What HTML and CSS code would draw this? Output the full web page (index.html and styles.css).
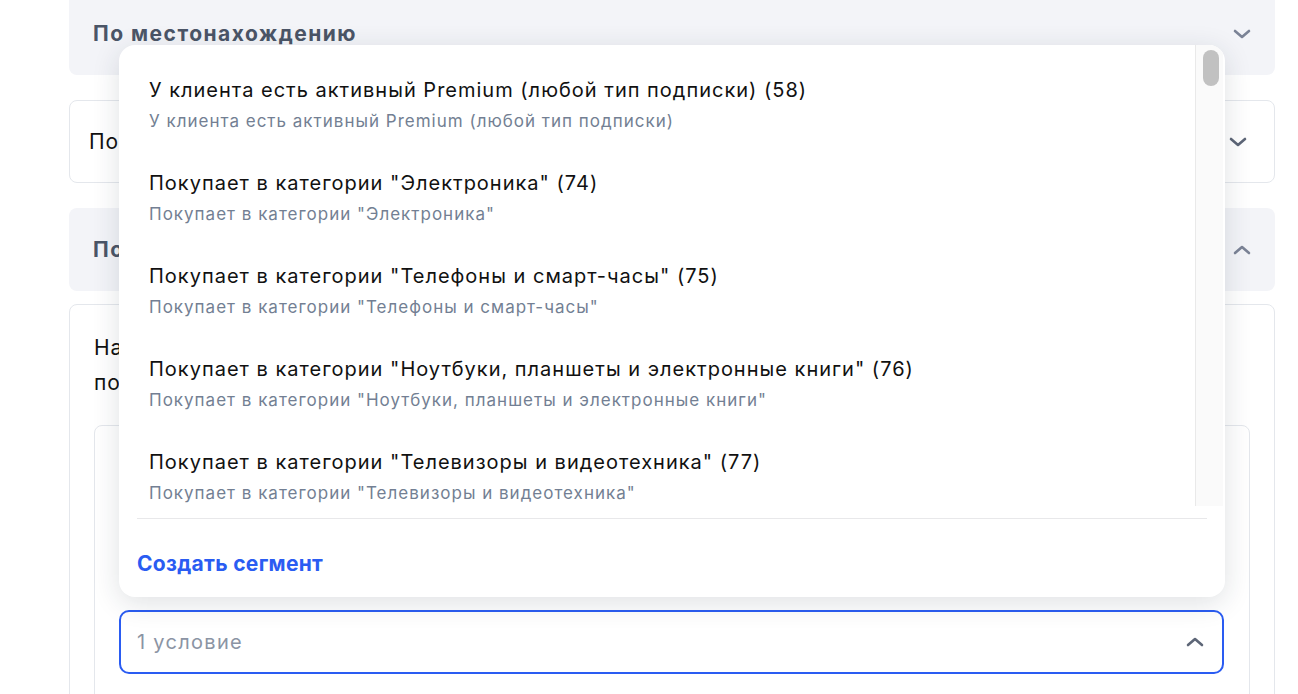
FILE: index.html
```html
<!DOCTYPE html>
<html lang="ru">
<head>
    <meta charset="UTF-8" />
    <meta name="viewport" content="width=device-width, initial-scale=1" />
    <title>Условия сегмента</title>
    <link rel="stylesheet" href="styles.css">
</head>
<body>
    <div class="page">
        <div class="section section-grey">
            <span class="section-title">По местонахождению</span>
            <svg class="chevron" width="18" height="10" viewBox="0 0 18 10"><path d="M2 2l7 6 7-6" /></svg>
        </div>

        <div class="section section-white">
            <span class="section-title-light">По сегментам</span>
            <svg class="chevron chevron-dark" width="18" height="10" viewBox="0 0 18 10"><path d="M2 2l7 6 7-6" /></svg>
        </div>

        <div class="section section-grey">
            <span class="section-title">По поведению</span>
            <svg class="chevron" width="18" height="10" viewBox="0 0 18 10"><path d="M2 8l7-6 7 6" /></svg>
        </div>

        <div class="panel">
            <p class="panel-text">На основе условий<br>подбираются клиенты</p>

            <div class="rule-box">
                <div class="select-wrap">
                    <!-- dropdown opens upwards over the rule box -->
                    <div class="dropdown">
                        <div class="dropdown-body">
                            <div class="options">
                                <div class="option">
                                    <div class="option-title">У клиента есть активный Premium (любой тип подписки) (58)</div>
                                    <div class="option-sub">У клиента есть активный Premium (любой тип подписки)</div>
                                </div>
                                <div class="option">
                                    <div class="option-title">Покупает в категории "Электроника" (74)</div>
                                    <div class="option-sub">Покупает в категории "Электроника"</div>
                                </div>
                                <div class="option">
                                    <div class="option-title">Покупает в категории "Телефоны и смарт-часы" (75)</div>
                                    <div class="option-sub">Покупает в категории "Телефоны и смарт-часы"</div>
                                </div>
                                <div class="option">
                                    <div class="option-title">Покупает в категории "Ноутбуки, планшеты и электронные книги" (76)</div>
                                    <div class="option-sub">Покупает в категории "Ноутбуки, планшеты и электронные книги"</div>
                                </div>
                                <div class="option">
                                    <div class="option-title">Покупает в категории "Телевизоры и видеотехника" (77)</div>
                                    <div class="option-sub">Покупает в категории "Телевизоры и видеотехника"</div>
                                </div>
                            </div>
                            <div class="scrollbar"><div class="scroll-thumb"></div></div>
                        </div>
                        <div class="dropdown-footer">
                            <a class="create-link" href="#">Создать сегмент</a>
                        </div>
                    </div>

                    <div class="select">
                        <span class="select-placeholder">1 условие</span>
                        <svg class="chevron chevron-dark" width="18" height="10" viewBox="0 0 18 10"><path d="M2 8l7-6 7 6" /></svg>
                    </div>
                </div>
            </div>
        </div>
    </div>
</body>
</html>
```

FILE: styles.css
```css
:root {
    --grey-bg: #f3f4f8;
    --border: #e4e7ec;
    --title: #4b5567;
    --text: #111111;
    --muted: #737f93;
    --blue: #2a5cf2;
}

body {
    font-family: Inter, "Noto Sans", sans-serif;
    color: var(--text);
    background: #fff;
    margin: 0;
    overflow: hidden;
}

.page {
    width: 1206px;
    margin: -8px 0 0 69px;
}

.section {
    height: 83px;
    box-sizing: border-box;
    display: flex;
    align-items: center;
    justify-content: space-between;
    border-radius: 8px;
}

.section-grey {
    background: var(--grey-bg);
    padding: 0 24px;
    margin-bottom: 25px;
}

.section-white {
    border: 1px solid var(--border);
    padding: 0 27px 0 19px;
    margin-bottom: 25px;
}

.section-grey + .section-white {
    margin-top: 1px;
}

.section-title {
    font-size: 21px;
    font-weight: 700;
    letter-spacing: 1.5px;
    color: var(--title);
}

.section-title-light {
    font-size: 21px;
    letter-spacing: 1px;
    color: var(--text);
}

.chevron path {
    fill: none;
    stroke: #7b8396;
    stroke-width: 2.6;
    stroke-linecap: round;
    stroke-linejoin: round;
}

.chevron-dark path {
    stroke: #5d6677;
}

.panel {
    margin-top: -12px;
    border: 1px solid var(--border);
    border-radius: 8px;
    padding: 25px 24px 0;
    height: 420px;
}

.panel-text {
    margin: 0 0 25px;
    font-size: 21px;
    line-height: 35px;
    letter-spacing: 1px;
}

.rule-box {
    border: 1px solid var(--border);
    border-radius: 8px;
    padding: 184px 25px 40px 24px;
}

.select-wrap {
    position: relative;
}

.select {
    height: 64px;
    box-sizing: border-box;
    border: 2px solid var(--blue);
    border-radius: 10px;
    display: flex;
    align-items: center;
    justify-content: space-between;
    padding: 0 18px 0 16px;
}

.select-placeholder {
    font-size: 20px;
    letter-spacing: 1.3px;
    color: #8b94a4;
}

.dropdown {
    position: absolute;
    left: 0;
    right: -1px;
    bottom: calc(100% + 13px);
    background: #fff;
    border-radius: 16px;
    box-shadow: 0 6px 28px rgba(30, 40, 60, 0.14);
    overflow: hidden;
}

.dropdown-body {
    display: flex;
    height: 461px;
}

.options {
    flex: 1;
    overflow: hidden;
    padding-top: 13px;
}

.option {
    padding: 18px 30px 19px;
}

.option-title {
    font-size: 20px;
    line-height: 28px;
    letter-spacing: 1px;
    color: var(--text);
}

.option-sub {
    margin-top: 6px;
    font-size: 17px;
    line-height: 22px;
    letter-spacing: 1px;
    color: var(--muted);
}

.scrollbar {
    width: 27px;
    margin-right: 2px;
    background: #fafafa;
    border-left: 1px solid #e9e9e9;
    padding-top: 5px;
}

.scroll-thumb {
    width: 16px;
    height: 36px;
    margin-left: 7px;
    border-radius: 8px;
    background: #c1c1c1;
}

.dropdown-footer {
    margin: 12px 18px 0;
    border-top: 1px solid #e8e8ea;
    padding: 31px 0 18px;
    line-height: 28px;
}

.create-link {
    font-size: 21px;
    font-weight: 700;
    letter-spacing: 0.3px;
    color: var(--blue);
    text-decoration: none;
}
```
